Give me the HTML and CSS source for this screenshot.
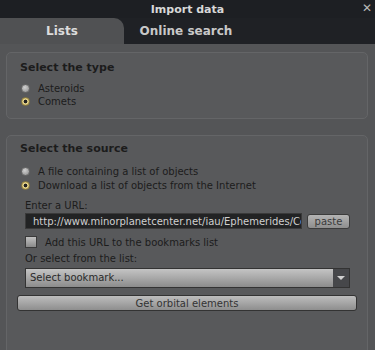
FILE: index.html
```html
<!DOCTYPE html>
<html lang="en">
  <head>
    <meta charset="UTF-8" />
    <title>Import data</title>
    <link rel="stylesheet" href="styles.css">
  </head>
  <body>
    <div class="dialog">
      <div class="titlebar">
        <span class="title">Import data</span>
        <span class="close">✕</span>
      </div>
      <div class="tabs">
        <div class="tab active">Lists</div>
        <div class="tab">Online search</div>
      </div>

      <div class="content">
        <div class="group type-group">
          <div class="group-title">Select the type</div>
          <label class="option"><span class="radio"></span> Asteroids</label>
          <label class="option"><span class="radio checked"></span> Comets</label>
        </div>

        <div class="group source-group">
          <div class="group-title">Select the source</div>
          <label class="option"><span class="radio"></span> A file containing a list of objects</label>
          <label class="option"><span class="radio checked"></span> Download a list of objects from the Internet</label>

          <div class="field-label url-label">Enter a URL:</div>
          <div class="url-row">
            <div class="url-input"><span>http://www.minorplanetcenter.net/iau/Ephemerides/Comets/Soft00Cmt.txt</span></div>
            <button class="small-btn">paste</button>
          </div>
          <label class="check-row"><span class="checkbox"></span> Add this URL to the bookmarks list</label>
          <div class="field-label list-label">Or select from the list:</div>
          <div class="select">
            <span class="select-text">Select bookmark...</span>
            <span class="select-arrow"></span>
          </div>
          <button class="wide-btn">Get orbital elements</button>
        </div>
      </div>
    </div>
  </body>
</html>
```

FILE: styles.css
```css
body {
  margin: 0;
  font-family: "DejaVu Sans", sans-serif;
  font-size: 10px;
  color: #1c1c1c;
  background: #1e2024;
}

.dialog {
  width: 375px;
  height: 350px;
  overflow: hidden;
  display: flex;
  flex-direction: column;
}

.titlebar {
  flex-shrink: 0;
  height: 18px;
  background: #1d1f23;
  color: #d8d8d8;
  font-weight: bold;
  font-size: 11px;
  display: flex;
  align-items: center;
  justify-content: center;
  position: relative;
}

.close {
  position: absolute;
  right: 3px;
  top: 1px;
  font-size: 12px;
  font-weight: bold;
  color: #b8b8b8;
}

.tabs {
  flex-shrink: 0;
  height: 26px;
  display: flex;
  background: #1f2125;
}

.tab {
  width: 124px;
  display: flex;
  align-items: center;
  justify-content: center;
  font-weight: bold;
  font-size: 12px;
  color: #c8c8c8;
}

.tab.active {
  background: #505153;
  border-radius: 0 10px 0 0;
  color: #dcdcdc;
}

.content {
  flex: 1;
  min-height: 0;
  background: #545557;
  padding: 8px 7px 0 6px;
}

.group {
  background: #58595b;
  border: 1px solid #646567;
  border-radius: 5px;
  padding: 8px 13px 0;
}

.type-group {
  height: 57px;
  margin-bottom: 16px;
}

.source-group {
  height: 220px;
  padding-top: 6px;
}

.group-title {
  font-weight: bold;
  font-size: 11px;
  height: 16px;
  margin-bottom: 5px;
}

.source-group .group-title {
  margin-bottom: 6px;
}

.option {
  display: flex;
  align-items: center;
  height: 13px;
  gap: 3px;
  margin-left: 1px;
}

.source-group .option {
  height: 14px;
}

.radio {
  width: 9px;
  height: 9px;
  border-radius: 50%;
  background: radial-gradient(circle at 40% 35%, #d0d0d0, #8a8a8a);
  border: 1px solid #6a6a6a;
  box-sizing: border-box;
  margin-right: 5px;
}

.radio.checked {
  background: radial-gradient(circle, #222 0 1.6px, #e6d690 2.2px, #b89a40 100%);
  border-color: #8a7a40;
}

.field-label {
  margin-left: 5px;
  height: 13px;
}

.url-label {
  margin-top: 8px;
}

.list-label {
  margin-top: 4px;
}

.url-row {
  display: flex;
  align-items: center;
  margin: 0 0 0 5px;
  gap: 5px;
}

.url-input {
  width: 277px;
  height: 16px;
  background: #222324;
  color: #d0d0d0;
  border: 1px solid #3a3a3a;
  line-height: 16px;
  padding-left: 7px;
  white-space: nowrap;
  overflow: hidden;
  box-sizing: border-box;
}

.small-btn {
  width: 43px;
  height: 15px;
  border: 1px solid #3c3c3c;
  border-radius: 3px;
  background: linear-gradient(#b4b4b4, #8e8e8e);
  font-family: "DejaVu Sans", sans-serif;
  font-size: 10px;
  color: #3a3a3a;
  padding: 0;
}

.check-row {
  display: flex;
  align-items: center;
  gap: 8px;
  margin: 6px 0 0 5px;
  height: 14px;
}

.checkbox {
  width: 10px;
  height: 10px;
  border: 1px solid #3a3a3a;
  background: linear-gradient(#c0c0c0, #8a8a8a);
}

.select {
  display: flex;
  margin: 2px 0 0 5px;
  width: 325px;
  height: 20px;
  border: 1px solid #333;
  box-sizing: border-box;
  background: linear-gradient(#c4c4c4, #8c8c8c);
}

.select-text {
  flex: 1;
  padding-left: 4px;
  line-height: 18px;
  color: #2a2a2a;
}

.select-arrow {
  width: 16px;
  background: #46474a;
  display: flex;
  align-items: center;
  justify-content: center;
}

.select-arrow::after {
  content: "";
  border-left: 4px solid transparent;
  border-right: 4px solid transparent;
  border-top: 4px solid #d0d0d0;
}

.wide-btn {
  display: block;
  margin: 7px 0 0 -3px;
  width: 340px;
  height: 16px;
  border: 1px solid #333;
  border-radius: 3px;
  background: linear-gradient(#bdbdbd, #8e8e8e);
  font-family: "DejaVu Sans", sans-serif;
  font-size: 10px;
  color: #333;
  padding: 0;
}
```
